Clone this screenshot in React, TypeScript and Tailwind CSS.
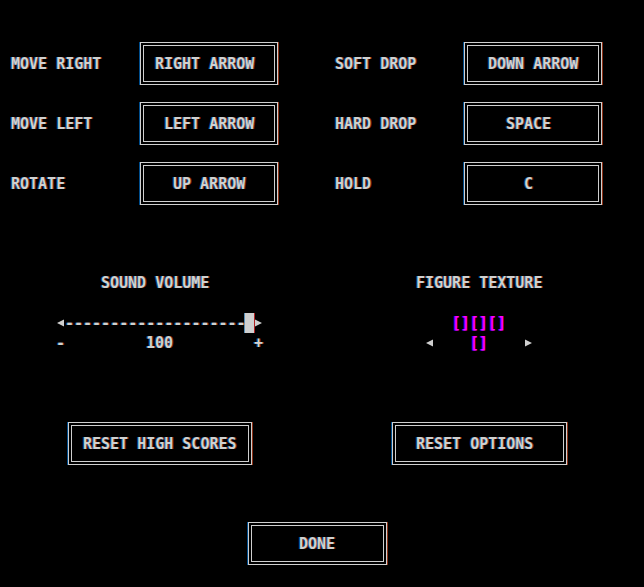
import React from 'react';

const glow = '[text-shadow:-1px_0_rgba(0,150,255,0.5),1px_0_rgba(255,90,40,0.5)]';

function KeyBox({ text, w, pl }: { text: string; w: string; pl: string }) {
  return (
    <div className={`${w} h-[43px] shrink-0 border border-[#cfcfcf] p-[2px] shadow-[-1px_0_0_rgba(0,140,255,0.55),1px_0_0_rgba(255,90,40,0.55)]`}>
      <div className={`h-full border border-[#cfcfcf] flex items-center ${pl}`}>
        <span className="whitespace-pre">{text}</span>
      </div>
    </div>
  );
}

function TriLeft() {
  return (
    <svg width="9" height="20" viewBox="0 0 9 20" className="shrink-0 block">
      <polygon points="1,10 8,6.5 8,13.5" fill="#cfcfcf" />
    </svg>
  );
}

function TriRight() {
  return (
    <svg width="9" height="20" viewBox="0 0 9 20" className="shrink-0 block">
      <polygon points="1,6.5 8,10 1,13.5" fill="#cfcfcf" />
    </svg>
  );
}

const leftKeys = [
  { label: 'MOVE RIGHT', key: 'RIGHT ARROW', pl: 'pl-[11px]' },
  { label: 'MOVE LEFT', key: 'LEFT ARROW', pl: 'pl-[20px]' },
  { label: 'ROTATE', key: 'UP ARROW', pl: 'pl-[29px]' },
];

const rightKeys = [
  { label: 'SOFT DROP', key: 'DOWN ARROW', pl: 'pl-[20px]' },
  { label: 'HARD DROP', key: 'SPACE', pl: 'pl-[38px]' },
  { label: 'HOLD', key: 'C', pl: 'pl-[56px]' },
];

export default function App() {
  return (
    <div className={`w-[644px] h-[587px] bg-black text-[#d0d0d0] font-['DejaVu_Sans_Mono',monospace] font-bold text-[15px] leading-[20px] pt-[42px] overflow-hidden ${glow}`}>
      {/* Key bindings */}
      <div className="flex">
        <div className="ml-[11px] flex flex-col gap-[17px]">
          {leftKeys.map((k) => (
            <div key={k.label} className="flex items-center h-[43px]">
              <span className="w-[129px] whitespace-pre">{k.label}</span>
              <KeyBox text={k.key} w="w-[138px]" pl={k.pl} />
            </div>
          ))}
        </div>
        <div className="ml-[57px] flex flex-col gap-[17px]">
          {rightKeys.map((k) => (
            <div key={k.label} className="flex items-center h-[43px]">
              <span className="w-[129px] whitespace-pre">{k.label}</span>
              <KeyBox text={k.key} w="w-[138px]" pl={k.pl} />
            </div>
          ))}
        </div>
      </div>

      {/* Volume + texture */}
      <div className="flex mt-[68px]">
        <div className="ml-[56px] w-[207px] flex flex-col">
          <div className="h-[20px] pl-[45px] whitespace-pre">SOUND VOLUME</div>
          <div className="h-[20px]" />
          <div className="h-[20px] flex">
            <TriLeft />
            <span className="w-[180px] overflow-hidden whitespace-pre">--------------------</span>
            <div className="w-[9px] h-[20px] bg-[#cfcfcf] shadow-[-1px_0_0_rgba(120,200,255,0.7),1px_0_0_rgba(220,40,40,0.8)]" />
            <TriRight />
          </div>
          <div className="h-[20px] flex whitespace-pre">
            <span className="w-[90px]">-</span>
            <span className="w-[108px]">100</span>
            <span>+</span>
          </div>
        </div>
        <div className="ml-[153px] w-[126px] flex flex-col">
          <div className="h-[20px] whitespace-pre">FIGURE TEXTURE</div>
          <div className="h-[20px]" />
          <div className="h-[20px] pl-[36px] whitespace-pre text-[#ff00ff] [text-shadow:-1px_0_#7a00ff]">[][][]</div>
          <div className="h-[20px] flex">
            <div className="w-[9px]" />
            <TriLeft />
            <span className="ml-[36px] w-[54px] whitespace-pre text-[#ff00ff] [text-shadow:-1px_0_#7a00ff]">[]</span>
            <TriRight />
          </div>
        </div>
      </div>

      {/* Reset buttons */}
      <div className="flex mt-[69px]">
        <div className="ml-[68px]">
          <KeyBox text="RESET HIGH SCORES" w="w-[184px]" pl="pl-[11px]" />
        </div>
        <div className="ml-[140px]">
          <KeyBox text="RESET OPTIONS" w="w-[175px]" pl="pl-[20px]" />
        </div>
      </div>

      {/* Done */}
      <div className="flex mt-[57px]">
        <div className="ml-[248px]">
          <KeyBox text="DONE" w="w-[139px]" pl="pl-[47px]" />
        </div>
      </div>
    </div>
  );
}
